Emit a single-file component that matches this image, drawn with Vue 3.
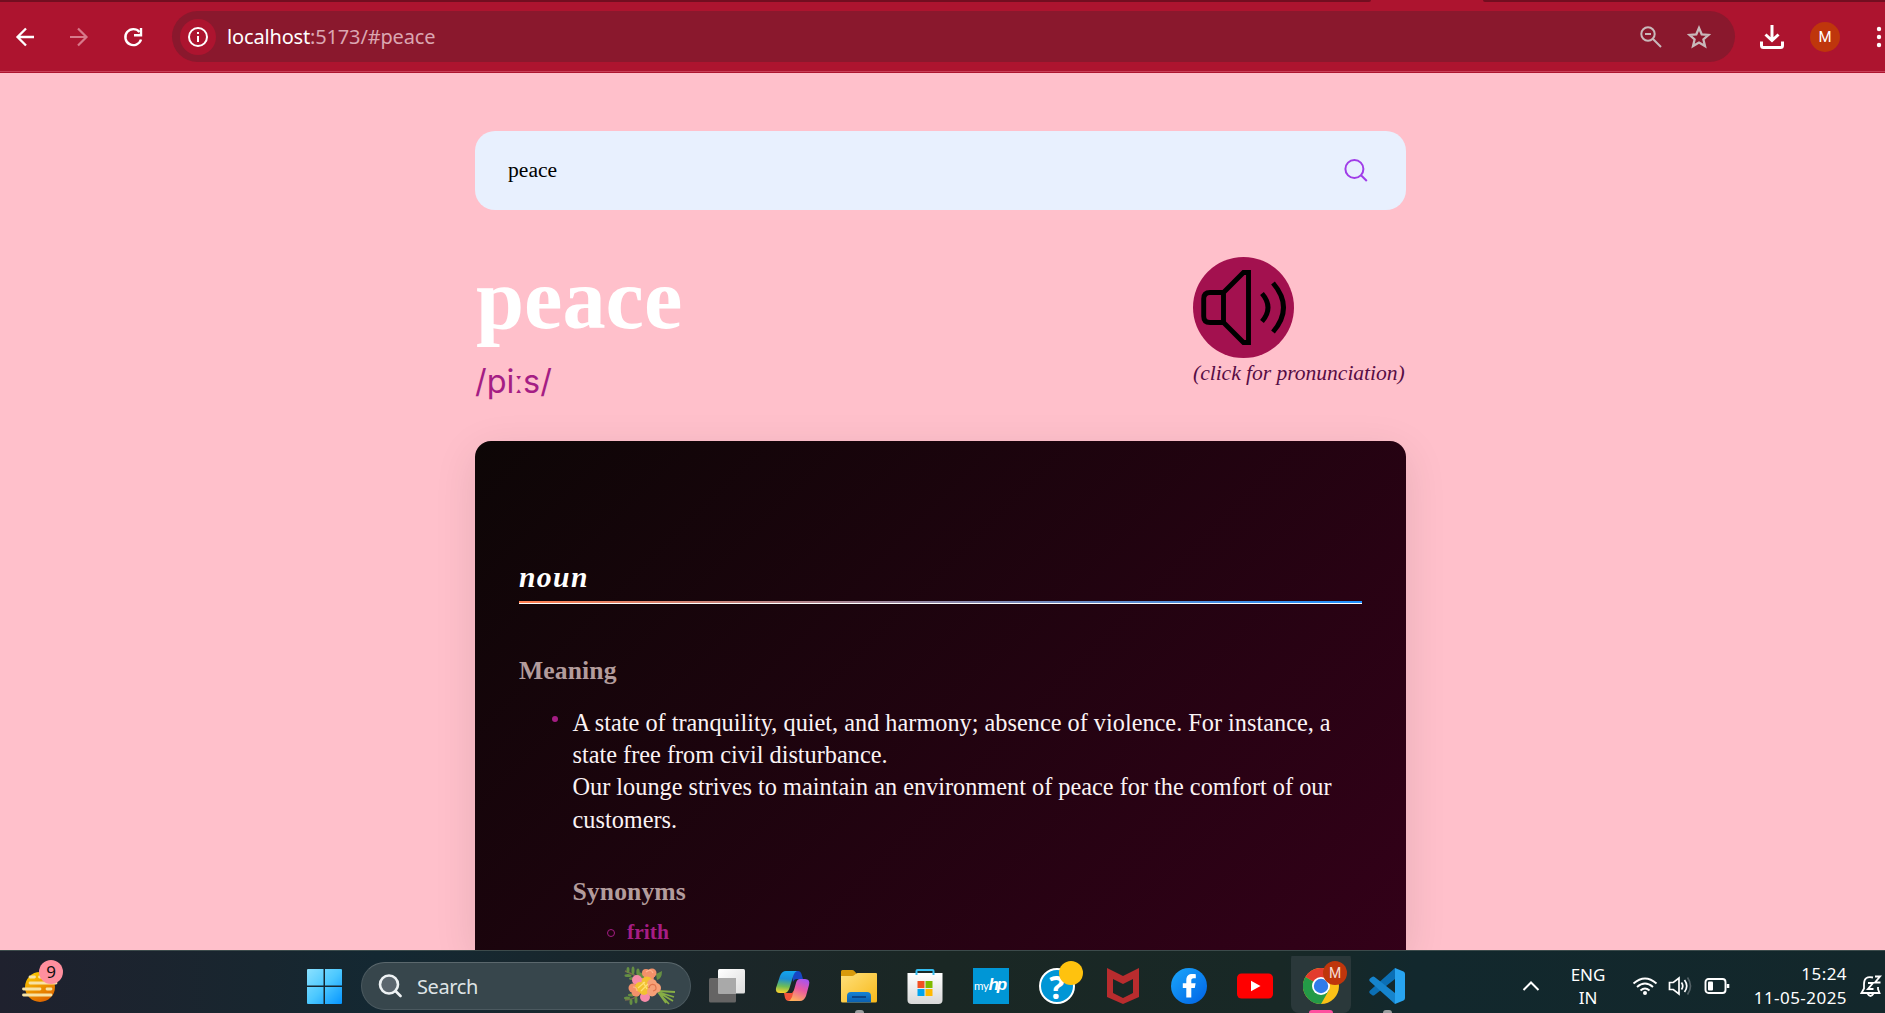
<script setup>
const word = 'peace'
const phonetic = '/piːs/'
const synonyms = ['frith']
</script>

<template>
  <div class="screen">
    <header class="toolbar">
      <div class="tabstrip"><i class="tabs-left"></i><i class="tabs-right"></i></div>
      <div class="bar">
        <svg class="nav" width="54" height="24" viewBox="0 0 54 24" fill="none" stroke="#fff" stroke-width="2.3"><path d="M34 12H17.5M26 3.500L17.500 12l8.500 8.500" /></svg>
        <svg class="nav" width="54" height="24" viewBox="0 0 54 24" fill="none" stroke="#d8798a" stroke-width="2.2"><path d="M16 12h16.500M24 3.500l8.500 8.500-8.500 8.500" /></svg>
        <svg class="nav" width="54" height="24" viewBox="0 0 54 24" fill="none" stroke="#fff" stroke-width="2.4"><path d="M33 14.500A8 8 0 1 1 31.500 7" /><path d="M33 3v7.200h-7" /></svg>
        <div class="omnibox">
          <span class="info"><svg width="22" height="22" viewBox="0 0 22 22" fill="none" stroke="#fff" stroke-width="2"><circle cx="11" cy="11" r="9" /><path d="M11 10v6M11 6v2" /></svg></span>
          <span class="url"><b>localhost</b>:5173/#{{ word }}</span>
          <svg class="zoomout" width="24" height="24" viewBox="0 0 24 24" fill="none" stroke="#c9b9bb" stroke-width="2"><circle cx="9" cy="9" r="6.700" /><path d="M14 14l8 8M6 9h6" /></svg>
          <svg class="star" width="24" height="24" viewBox="0 0 24 24" fill="none" stroke="#c9b9bb" stroke-width="2.300"><path d="M12 3l2.700 6.300 6.900.6-5.200 4.500 1.600 6.700-6-3.600-6 3.600 1.600-6.700-5.200-4.500 6.900-.6z" /></svg>
        </div>
        <svg class="download" width="26" height="26" viewBox="0 0 26 26" fill="none" stroke="#fff" stroke-width="3"><path d="M13 1v15M6.500 10.500L13 16.500l6.500-6M2.500 17.500v4q0 2 2 2h17q2 0 2-2v-4" /></svg>
        <span class="avatar">M</span>
        <svg class="dots" width="8" height="24" viewBox="0 0 8 24" fill="#fff"><circle cx="4" cy="4" r="2.200" /><circle cx="4" cy="12" r="2.200" /><circle cx="4" cy="20" r="2.200" /></svg>
      </div>
    </header>

    <main class="page">
      <div class="searchbox">
        <span>{{ word }}</span>
        <svg width="24" height="24" viewBox="0 0 24 24" fill="none" stroke="#a03de8" stroke-width="2"><circle cx="10.400" cy="10" r="9" /><path d="M16.800 16l6 6" /></svg>
      </div>
      <section class="heading">
        <div>
          <h1>{{ word }}</h1>
          <p class="phonetic">{{ phonetic }}</p>
        </div>
        <div class="audio">
          <svg width="101" height="101" viewBox="0 0 101 101" fill="none" stroke="#000" stroke-width="4.900">
            <circle cx="50.500" cy="50.500" r="50.500" fill="#a3114f" stroke="none" />
            <path d="M30.500 35.500H17q-6.300 0-6.300 6.300v17.400q0 6.300 6.300 6.300h13.500zM30.500 35.500l20-20h5v70h-5l-20-20" />
            <path d="M69 36.500q12 14 0 28M80 26q21 24.500 0 49" />
          </svg>
          <em>(click for pronunciation)</em>
        </div>
      </section>
      <article class="card">
        <h2>noun</h2>
        <div class="rule"></div>
        <h3>Meaning</h3>
        <div class="entry">
          <i class="disc"></i>
          <p>A state of tranquility, quiet, and harmony; absence of violence. For instance, a<br>state free from civil disturbance.<br>Our lounge strives to maintain an environment of peace for the comfort of our<br>customers.</p>
        </div>
        <h3 class="syn-title">Synonyms</h3>
        <div v-for="s in synonyms" :key="s" class="syn"><i class="ring"></i>{{ s }}</div>
      </article>
    </main>

    <footer class="taskbar">
      <div class="weather">
        <svg width="44" height="34" viewBox="0 0 44 34">
          <defs><linearGradient id="sun" x1="0" y1="0" x2=".5" y2="1"><stop offset="0" stop-color="#ffd400" /><stop offset="1" stop-color="#e06a00" /></linearGradient></defs>
          <circle cx="18" cy="17" r="15" fill="url(#sun)" />
          <g stroke="#f8e3a4" stroke-width="2.800" stroke-linecap="round"><path d="M8 7h4.500M17.500 7h4M8 13h26M1.500 19H18M25 19h4M1.500 25H29" /></g>
        </svg>
        <span class="count">9</span>
      </div>
      <svg class="start" width="35" height="35" viewBox="0 0 35 35">
        <defs><linearGradient id="win" x1="0" y1="0" x2="1" y2="1" ><stop offset="0" stop-color="#8be1ff" /><stop offset=".5" stop-color="#4cc8ff" /><stop offset="1" stop-color="#0695ff" /></linearGradient></defs>
        <path fill="url(#win)" d="M1 0h15.500v16.500H0V1q0-1 1-1zM18 0h16q1 0 1 1v15.500H18zM0 18h16.500v17H1q-1 0-1-1zM18 18h17v16q0 1-1 1H18z" />
      </svg>
      <div class="pill">
        <svg width="24" height="24" viewBox="0 0 24 24" fill="none" stroke="#eef2f4" stroke-width="2.600" stroke-linecap="round"><circle cx="11" cy="10.500" r="9" fill="#5b666e" /><path d="M17.500 17l5 5" /></svg>
        <span>Search</span>
        <svg class="flowers" width="54" height="40" viewBox="0 0 54 40">
          <g stroke="#55803f" stroke-width="1.400" fill="none"><path d="M2 5q9 3 17 9M2 34q9 0 16-7" stroke="#7a6b4c" /></g>
          <g fill="#668f43"><ellipse cx="5" cy="4" rx="1.500" ry="3" /><ellipse cx="10" cy="4.500" rx="1.500" ry="4" /><ellipse cx="5" cy="9.500" rx="3.500" ry="1.500" /><ellipse cx="10" cy="12.500" rx="4" ry="1.600" /><ellipse cx="15" cy="6" rx="1.700" ry="3.500" /><ellipse cx="4" cy="32" rx="3" ry="1.500" /><ellipse cx="8" cy="36" rx="1.500" ry="3" /><ellipse cx="13" cy="34" rx="1.500" ry="3.500" /><ellipse cx="8" cy="29" rx="3" ry="1.500" /><path d="M15 6q10 1 8 10l-7-3zM33 8l6-3q0 8-5 9z" /></g>
          <path d="M35 25l17 1M35 26l16 5M35 26l15 9M35 26l11 12M35 26l8 11" stroke="#86ad45" stroke-width="1.800" />
          <g fill="#f68ba9"><circle cx="14" cy="14" r="5" /><circle cx="22" cy="31" r="5" /><circle cx="18" cy="17" r="5" /></g>
          <g fill="#f3916a"><circle cx="23" cy="7" r="4" /><circle cx="29" cy="7" r="4.500" /><circle cx="26" cy="11" r="5" /><circle cx="10" cy="22" r="4.500" /><circle cx="13" cy="26" r="4.500" /></g>
          <g fill="#f2c230"><circle cx="17" cy="21" r="5" /><circle cx="24" cy="16" r="5.500" /><circle cx="21" cy="24" r="5" /></g>
          <g fill="#f6a077"><circle cx="29" cy="18" r="5" /><circle cx="33" cy="22" r="5" /><circle cx="29" cy="25.500" r="5" /></g>
          <g fill="none" stroke-width="1.200"><path d="M26 22q1-5 6-3 3 5-2 6" stroke="#e0744d" /><path d="M23 6q5-4 7 1M10 21q4 0 4 4" stroke="#ffb48e" /><path d="M15 22l7-6M18 25l7-7M20 16l4 7" stroke="#fee174" /></g>
        </svg>
      </div>
      <nav class="apps">
        <div class="app"><svg width="36" height="36" viewBox="0 0 36 36"><defs><linearGradient id="tv" x1="0" y1="0" x2="1" y2="1"><stop stop-color="#fff" /><stop offset="1" stop-color="#dcdcdc" /></linearGradient></defs><rect y="10" width="27" height="24.500" rx="1.500" fill="#656464" /><rect x="9" y="1" width="27" height="24.500" rx="1.500" fill="url(#tv)" /><path d="M9 10h18v15.500H9z" fill="#a9a9a9" /></svg></div>
        <div class="app"><svg width="36" height="36" viewBox="0 0 36 36">
          <defs>
            <linearGradient id="cpa" x1=".4" y1="0" x2=".3" y2="1"><stop stop-color="#12a5ef" /><stop offset=".35" stop-color="#1b8ed5" /><stop offset=".7" stop-color="#6fbd55" /><stop offset="1" stop-color="#ffd32d" /></linearGradient>
            <linearGradient id="cpb" x1=".7" y1="0" x2=".3" y2="1"><stop stop-color="#a954ed" /><stop offset=".45" stop-color="#ea5aa0" /><stop offset="1" stop-color="#ffb25a" /></linearGradient>
          </defs>
          <path d="M17 3h6q2.500 0 3.500 3l1.500 5h-6q-3 0-4 3z" fill="#1746c4" />
          <path d="M9 25h8l3-4-2 8q-1 4-5 4-2 0-3-3z" fill="#f2533a" />
          <path d="M11 3h11q-2.500 1-3.500 4l-4 13q-1.500 5-5.500 5H5q-5 0-4-5l4-12q2-5 6-5z" fill="url(#cpa)" />
          <path d="M25 11h5q5.500 0 4 6l-3 11q-2 5-6 5H13q3-1 4-4l4-14q1-4 4-4z" fill="url(#cpb)" />
        </svg></div>
        <div class="app"><svg width="36" height="36" viewBox="0 0 36 36"><defs><linearGradient id="fold" x1="0" y1="0" x2="1" y2="1"><stop stop-color="#ffe07b" /><stop offset="1" stop-color="#f8b91a" /></linearGradient><linearGradient id="fb" x1="0" y1="0" x2="0" y2="1"><stop stop-color="#1683d4" /><stop offset="1" stop-color="#0b5fb0" /></linearGradient></defs><path d="M0 3.500Q0 2 1.500 2H11q1.500 0 2.500 1.200L16 6v10H0z" fill="#d99a0b" /><path d="M0 8h11q1.500 0 2.500-1T16.500 5H35q1 0 1 1v27q0 1.500-1.500 1.500H1.500Q0 34.500 0 33z" fill="url(#fold)" /><path d="M6 34.500V28q0-4 4-4h16q4 0 4 4v6.500z" fill="url(#fb)" /><path d="M11 29h14" stroke="#0b3e7c" stroke-width="1.700" /></svg><i class="running"></i></div>
        <div class="app"><svg width="36" height="36" viewBox="0 0 36 36"><defs><linearGradient id="st" x1="0" y1="0" x2="0" y2="1"><stop stop-color="#fff" /><stop offset="1" stop-color="#d8d8d8" /></linearGradient></defs><path d="M.5 5h35v27q0 4-4 4h-27q-4 0-4-4z" fill="url(#st)" /><path d="M9.500 7V3q0-1 1-1h15q1 0 1 1v4" fill="none" stroke="#35bdf0" stroke-width="2" /><path d="M10.500 13h7v7h-7z" fill="#f25022" /><path d="M18.500 13h7v7h-7z" fill="#7fba00" /><path d="M10.500 21h7v7h-7z" fill="#00a4ef" /><path d="M18.500 21h7v7h-7z" fill="#ffb900" /></svg></div>
        <div class="app"><span class="myhp"><small>my</small><b>hp</b></span></div>
        <div class="app"><span class="help">?</span><i class="yellow"></i></div>
        <div class="app"><svg width="36" height="36" viewBox="0 0 36 36"><path d="M2 0l16 8L34 0v29l-16 7-16-7zM8 11v14l10 5 10-5V11l-10 5z" fill="#b92c2e" fill-rule="evenodd" /></svg></div>
        <div class="app"><svg width="36" height="36" viewBox="0 0 36 36"><defs><linearGradient id="face" x1="0" y1="0" x2="1" y2="1"><stop stop-color="#1aa7fb" /><stop offset="1" stop-color="#0062e6" /></linearGradient></defs><circle cx="18" cy="18" r="18" fill="url(#face)" /><path d="M15.300 29.500V20h-3.500v-4.700h3.500v-3.100c0-4.300 2.400-6.200 6-6.200 1.300 0 2.500.1 3.500.3v4h-2.200c-1.800 0-2.300.9-2.300 2.300v2.700h4.300l-.8 4.700h-3.500v9.500z" fill="#fff" /></svg></div>
        <div class="app"><svg width="36" height="36" viewBox="0 0 36 36"><rect y="5.500" width="36" height="25" rx="4.500" fill="#f00" /><path d="M14 12.800v10.400l9.500-5.200z" fill="#fff" /></svg></div>
        <div class="app active"><svg width="36" height="36" viewBox="0 0 36 36"><circle cx="18" cy="18" r="18" fill="#fbc116" /><path d="M18 18L2.400 9A18 18 0 0 1 33.600 9z" fill="#e33b2e" /><path d="M2.400 9A18 18 0 0 0 18 36l8-14-8-4z" fill="#249a47" /><path d="M18 9h15.600H18z" fill="#e33b2e" /><circle cx="18" cy="18" r="9" fill="#fff" /><circle cx="18" cy="18" r="7.200" fill="#317bea" /></svg><i class="profile">M</i><i class="current"></i></div>
        <div class="app"><svg width="36" height="36" viewBox="0 0 36 36"><path d="M26 0L1 22.500q-1.500 1.500 0 3L3 27q1.300 1 2.600 0L26 11z" fill="#0b6fb5" /><path d="M26 36L1 13.500q-1.500-1.500 0-3L3 9q1.300-1 2.600 0L26 25z" fill="#1684cd" /><path d="M26 0l8.500 3.500Q36 4.300 36 6v24q0 1.700-1.500 2.500L26 36z" fill="#28a4f0" /></svg><i class="running"></i></div>
      </nav>
      <svg class="chevron" width="18" height="12" viewBox="0 0 18 12" fill="none" stroke="#fff" stroke-width="2"><path d="M1.500 10L9 2.500l7.500 7.500" /></svg>
      <div class="lang">ENG<br>IN</div>
      <div class="status">
        <svg width="26" height="20" viewBox="0 0 26 20" fill="none" stroke="#fff" stroke-width="1.900"><path d="M1.500 7.500q11.500-10 23 0M5 11q8-7 16 0M8.500 14.500q4.500-4 9 0" /><circle cx="13" cy="17" r="2" fill="#fff" stroke="none" /></svg>
        <svg width="26" height="20" viewBox="0 0 26 20" fill="none" stroke="#fff" stroke-width="1.700"><path d="M1.500 6.500h3.800L11 2v16l-5.700-4.500H1.500zM13.500 6.500q2.500 3.500 0 7M16.500 4q4.500 6 0 12" /><path d="M19.500 1.500q6 8.500 0 17" stroke="#536166" /></svg>
        <svg width="26" height="20" viewBox="0 0 26 20" fill="none" stroke="#fff" stroke-width="1.900"><rect x="1.500" y="3" width="20" height="14" rx="3" /><path d="M24 8v4" stroke-width="2.600" /><rect x="4" y="5.500" width="5" height="9" rx="1" fill="#fff" stroke="none" /></svg>
      </div>
      <div class="clock">15:24<br>11-05-2025</div>
      <svg class="bell" width="22" height="24" viewBox="0 0 22 24" fill="none" stroke="#fff" stroke-width="1.800"><path d="M13 3.500Q4 1.500 4 10v4.500L1.500 19h18L18 15v-2M7.500 19.500q3 5 6 0" /><path d="M8 9h5l-5 6h5.500M15 2.500h5L15 8.500h5.500" stroke-width="1.900" /></svg>
    </footer>
  </div>
</template>

<style>
html, body { margin: 0; overflow: hidden; }
</style>

<style scoped>
* { box-sizing: border-box; }
svg { display: block; flex: none; }
.screen { width: 1885px; height: 1013px; display: flex; flex-direction: column; overflow: hidden; background: #ffc0cb; font-family: "Liberation Serif", serif; }

.toolbar { height: 73px; flex: none; background: linear-gradient(#ad142f 71px, #c84059 71px, #c84059 72px, #ad142f 72px); }
.tabstrip { height: 2px; display: flex; justify-content: space-between; }
.tabs-left { width: 1371px; background: #730e20; border-bottom-right-radius: 3px; }
.tabs-right { width: 402px; background: #730e20; border-bottom-left-radius: 3px; }
.bar { height: 69px; display: flex; align-items: center; }
.omnibox { width: 1563px; height: 51px; margin-left: 10px; border-radius: 26px; background: #8a182d; display: flex; align-items: center; flex: none; }
.info { width: 36px; height: 36px; margin-left: 8px; border-radius: 50%; background: #ad142f; display: flex; align-items: center; justify-content: center; flex: none; }
.url { margin-left: 11px; font: 20px/28px "Noto Sans", sans-serif; letter-spacing: -.16px; color: #dba6b1; flex: 1; }
.url b { font-weight: 400; color: #fff; }
.zoomout { margin-right: 24px; }
.star { margin-right: 24px; }
.download { margin-left: 24px; }
.avatar { width: 30px; height: 30px; margin-left: 25px; border-radius: 50%; background: #bf360c; color: #fff; font: 15px/30px Roboto, sans-serif; text-align: center; flex: none; }
.dots { margin-left: 35px; }

.page { width: 931px; height: 877px; margin: 0 auto 0 475px; padding-top: 58px; flex: none; }
.searchbox { height: 79px; padding: 0 38px 0 33px; border-radius: 20px; background: #e8f0fe; display: flex; align-items: center; justify-content: space-between; font-size: 21.6px; color: #000; }
.heading { height: 231px; display: flex; justify-content: space-between; }
h1 { margin: 40px 0 0 1px; font-size: 86.4px; line-height: 98px; color: #fff; }
.phonetic { margin: 13px 0 0; font: 32.4px/42px Inter, sans-serif; color: #a51d84; }
.audio { width: 213px; padding-top: 47px; color: #570d45; }
.audio em { display: block; font-size: 21.6px; line-height: 30px; letter-spacing: -.04px; white-space: nowrap; }
.card { height: 509px; padding: 120px 44px 0; border-radius: 16px 16px 0 0; background: linear-gradient(135deg, #0d0606, #36001a 108%); box-shadow: 0 11px 43px rgba(0, 0, 0, .1); overflow: hidden; }
h2 { margin: -1px 0 0; height: 41px; font: italic bold 29.7px/34px "Liberation Serif", serif; letter-spacing: 1.35px; color: #fff; }
.rule { height: 3px; background: linear-gradient(90deg, #ff7f50, #1e90ff); border-bottom: 1px solid #fff; }
h3 { margin: 51px 0 0; font-size: 25.65px; line-height: 32px; letter-spacing: .1px; color: #b39c9c; }
.entry { display: flex; margin-top: 19px; }
.disc { width: 6px; height: 6px; margin: 10px 14.5px 0 33px; border-radius: 50%; background: #a51d84; flex: none; }
.entry p { margin: .5px 0; font-size: 24.3px; line-height: 32.4px; color: #fbf3f5; white-space: nowrap; }
.syn-title { margin: 39px 0 0 53.5px; }
.syn { display: flex; align-items: center; margin: 10px 0 0 88px; font-size: 21.6px; line-height: 28px; font-weight: bold; color: #a51d84; }
.ring { width: 8px; height: 8px; margin: 3px 12px 0 0; border: 1px solid #a51d84; border-radius: 50%; }

.taskbar { height: 63px; flex: none; display: flex; align-items: flex-start; position: relative; z-index: 1; border-top: 1px solid #3c4b4b; background: linear-gradient(90deg, #1f212e, #18262f 14%, #142832 20%, #1b2629 38%, #1a2724 50%, #182826 68%, #12282d 75%, #13272b); font-family: "Noto Sans", sans-serif; color: #fff; }
.weather { position: relative; margin: 19px 0 0 22px; }
.count { position: absolute; left: 17px; top: -10px; width: 24px; height: 24px; border-radius: 50%; background: #ff8f9e; color: #111; font-size: 17px; line-height: 24px; text-align: center; }
.start { margin: 18px 0 0 241px; }
.pill { width: 330px; height: 48px; margin: 11px 0 0 19px; padding: 0 13px 0 16px; border-radius: 24px; border: 1px solid #4b595f; border-top-color: #5b686d; background: #37464c; display: flex; align-items: center; flex: none; }
.pill span { margin-left: 15px; font-size: 20px; letter-spacing: -.4px; color: #dfe4e6; flex: 1; }
.apps { display: flex; margin-left: 3px; flex: none; }
.app { position: relative; width: 60px; height: 62px; margin: 0 3px; padding: 17px 12px 0; }
.active { background: linear-gradient(#2a383a, #2a383a) 0 5px no-repeat; border-radius: 8px; }
.running, .current { position: absolute; bottom: 0; height: 3px; left: 26px; width: 9px; background: #9b9e9f; border-radius: 3px 3px 0 0; }
.current { left: 18px; width: 24px; background: #ff4f9f; }
.yellow, .profile { position: absolute; left: 32px; top: 10px; width: 24px; height: 24px; border-radius: 50%; background: #ffc20e; }
.profile { background: #bf360c; font: 14px/24px Roboto, sans-serif; text-align: center; color: #f5ded5; }
.myhp { width: 36px; height: 36px; background: #0096d6; display: flex; align-items: center; justify-content: center; }
.myhp small { font: 11.5px/36px Lato, sans-serif; letter-spacing: -.4px; }
.myhp b { font: italic bold 17px/34px "Liberation Sans", sans-serif; letter-spacing: -2.200px; padding: 0 3px 2px 0; }
.help { display: block; width: 36px; height: 36px; border: 2px solid #fff; border-radius: 50%; background: #0096d6; font: bold 32px/33px "Open Sans", sans-serif; text-align: center; }
.chevron { margin: 29px 0 0 102px; }
.lang { width: 60px; margin: 12px 0 0 18px; font-size: 17px; line-height: 23px; text-align: center; letter-spacing: -.1px; flex: none; }
.status { display: flex; gap: 10px; margin: 25px 0 0 14px; flex: none; }
.clock { width: 116px; margin: 11px 0 0 1px; font-size: 17px; line-height: 24px; text-align: right; letter-spacing: .45px; flex: none; }
.bell { margin: 23px 0 0 13px; }
</style>
